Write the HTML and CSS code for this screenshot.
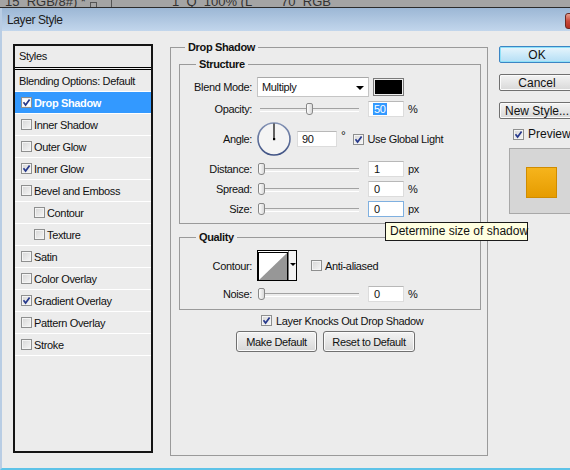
FILE: index.html
```html
<!DOCTYPE html>
<html>
<head>
<meta charset="utf-8">
<link rel="stylesheet" href="styles.css">
</head>
<body>
<div class="strip"><span class="strip-text">15_RGB/8#) *</span><span class="strip-box"></span><span class="strip-sep"></span><span class="strip-text2">1_Q_100% (L____70_RGB</span></div>
<div class="win">
  <div class="titlebar"><span class="title">Layer Style</span><span class="close"></span></div>
  <div class="content">
    <div class="lp">
      <div class="lp-head">Styles</div>
      <div class="lp-list">
        <div class="lp-row plain">Blending Options: Default</div>
        <div class="lp-row sel"><span class="cb on"><svg viewBox="0 0 11 11"><path d="M2.5 5.2 L4.6 8 L8.6 2.4"/></svg></span>Drop Shadow</div>
        <div class="lp-row"><span class="cb"></span>Inner Shadow</div>
        <div class="lp-row"><span class="cb"></span>Outer Glow</div>
        <div class="lp-row"><span class="cb on"><svg viewBox="0 0 11 11"><path d="M2.5 5.2 L4.6 8 L8.6 2.4"/></svg></span>Inner Glow</div>
        <div class="lp-row"><span class="cb"></span>Bevel and Emboss</div>
        <div class="lp-row sub"><span class="cb"></span>Contour</div>
        <div class="lp-row sub"><span class="cb"></span>Texture</div>
        <div class="lp-row"><span class="cb"></span>Satin</div>
        <div class="lp-row"><span class="cb"></span>Color Overlay</div>
        <div class="lp-row"><span class="cb on"><svg viewBox="0 0 11 11"><path d="M2.5 5.2 L4.6 8 L8.6 2.4"/></svg></span>Gradient Overlay</div>
        <div class="lp-row"><span class="cb"></span>Pattern Overlay</div>
        <div class="lp-row"><span class="cb"></span>Stroke</div>
      </div>
    </div>

    <fieldset class="main">
      <legend>Drop Shadow</legend>
      <fieldset class="grp structure">
        <legend>Structure</legend>
        <div class="row r-blend">
          <span class="lbl">Blend Mode:</span>
          <div class="select">Multiply<span class="arrow"></span></div>
          <span class="swatch"></span>
        </div>
        <div class="row r-op">
          <span class="lbl">Opacity:</span>
          <div class="slider"><span class="thumb" style="left:48px"></span></div>
          <span class="num"><span class="hl">50</span></span>
          <span class="unit">%</span>
        </div>
        <div class="row r-angle">
          <span class="lbl">Angle:</span>
          <svg class="dial" viewBox="0 0 34 34" width="34" height="34">
            <defs><linearGradient id="rg" x1="0" y1="0" x2="0" y2="1"><stop offset="0" stop-color="#8493b5"/><stop offset="1" stop-color="#3f5284"/></linearGradient></defs>
            <circle cx="17" cy="17" r="16" fill="#f4f4f4" stroke="url(#rg)" stroke-width="1.6"/>
            <line x1="17" y1="17" x2="17" y2="1.5" stroke="#000" stroke-width="1.2"/>
            <rect x="16" y="16" width="2.2" height="2.2" fill="#000"/>
          </svg>
          <span class="num wide">90</span>
          <span class="deg">°</span>
          <span class="cb on"><svg viewBox="0 0 11 11"><path d="M2.5 5.2 L4.6 8 L8.6 2.4"/></svg></span>
          <span class="cbl">Use Global Light</span>
        </div>
        <div class="row r-s r-dist">
          <span class="lbl">Distance:</span>
          <div class="slider"><span class="thumb" style="left:0px"></span></div>
          <span class="num">1</span>
          <span class="unit">px</span>
        </div>
        <div class="row r-s">
          <span class="lbl">Spread:</span>
          <div class="slider"><span class="thumb" style="left:0px"></span></div>
          <span class="num">0</span>
          <span class="unit">%</span>
        </div>
        <div class="row r-s">
          <span class="lbl">Size:</span>
          <div class="slider"><span class="thumb" style="left:0px"></span></div>
          <span class="num focus">0</span>
          <span class="unit">px</span>
        </div>
      </fieldset>

      <fieldset class="grp quality">
        <legend>Quality</legend>
        <div class="row r-contour">
          <span class="lbl">Contour:</span>
          <div class="contour">
            <svg viewBox="0 0 28 27" width="28" height="27" preserveAspectRatio="none"><rect width="28" height="27" fill="#fff"/><polygon points="0,27 28,0 28,27" fill="#979797"/></svg>
            <span class="c-arrow"></span>
          </div>
          <span class="cb"></span>
          <span class="cbl">Anti-aliased</span>
        </div>
        <div class="row r-noise">
          <span class="lbl">Noise:</span>
          <div class="slider"><span class="thumb" style="left:0px"></span></div>
          <span class="num">0</span>
          <span class="unit">%</span>
        </div>
      </fieldset>

      <div class="knock"><span class="cb on"><svg viewBox="0 0 11 11"><path d="M2.5 5.2 L4.6 8 L8.6 2.4"/></svg></span><span class="cbl">Layer Knocks Out Drop Shadow</span></div>
      <div class="btns">
        <span class="btn b-make">Make Default</span>
        <span class="btn b-reset">Reset to Default</span>
      </div>
    </fieldset>

    <div class="side">
      <span class="btn sbtn ok">OK</span>
      <span class="btn sbtn">Cancel</span>
      <span class="btn sbtn">New Style...</span>
      <div class="prev-row"><span class="cb on"><svg viewBox="0 0 11 11"><path d="M2.5 5.2 L4.6 8 L8.6 2.4"/></svg></span><span class="cbl big">Preview</span></div>
      <div class="prev-box"><span class="prev-sq"></span></div>
    </div>
  </div>
</div>
<div class="tooltip">Determine size of shadow</div>
</body>
</html>
```
FILE: styles.css
```css
* { box-sizing: border-box; }
html, body { margin: 0; padding: 0; }
body {
  width: 570px;
  height: 470px;
  overflow: hidden;
  background: #ececec;
  font-family: "Liberation Sans", Tahoma, sans-serif;
  font-size: 11px;
  letter-spacing: -0.35px;
  color: #111;
  position: relative;
}

/* background app strip */
.strip {
  height: 8px;
  background: #a4a4a4;
  border-bottom: 1px solid #2c2c2c;
  overflow: hidden;
  display: flex;
  align-items: flex-end;
  white-space: nowrap;
  letter-spacing: 0;
}
.strip-text, .strip-text2 {
  font-size: 13px;
  line-height: 13px;
  margin-bottom: -1px;
  color: #333;
}
.strip-text { margin-left: 5px; }
.strip-box {
  width: 7px; height: 5px;
  border: 1px solid #555;
  border-bottom: none;
  margin-left: 4px;
}
.strip-sep {
  width: 1px; height: 8px;
  background: #555;
  margin-left: 14px;
}
.strip-text2 { margin-left: 60px; }

.win {
  height: 462px;
  border-left: 2px solid #b9cde4;
  border-bottom: 2px solid #5ec3e8;
}

.titlebar {
  height: 23px;
  background: linear-gradient(#9cb7d5, #c2d6ec);
  display: flex;
  align-items: center;
  justify-content: space-between;
  overflow: hidden;
}
.title {
  font-size: 12px;
  letter-spacing: -0.4px;
  color: #1c1c1c;
  margin-left: 5px;
  margin-top: 1px;
}
.close {
  width: 40px;
  height: 16px;
  margin-right: -35px;
  margin-top: 2px;
  border: 1px solid #6b2a22;
  border-radius: 3px;
  background: linear-gradient(#e7a08e, #c9483a 50%, #b23021);
}

.content {
  display: flex;
  align-items: flex-start;
  padding: 13px 0 0 11px;
}

/* left panel */
.lp {
  width: 140px;
  height: 409px;
  border: 2px solid #141414;
  flex: none;
}
.lp-head {
  height: 22px;
  line-height: 21px;
  padding-left: 4px;
  border-bottom: 1px solid #000;
  margin-bottom: 1px;
}
.lp-list { border-top: 1px solid #000; }
.lp-row {
  height: 22px;
  border-bottom: 1px solid #fff;
  display: flex;
  align-items: center;
  padding-left: 6px;
  white-space: nowrap;
}
.lp-row.plain { padding-left: 4px; }
.lp-row.sub { padding-left: 19px; }
.lp-row.sel {
  background: #3399ff;
  color: #fff;
  font-weight: bold;
}
.lp-row .cb { margin-right: 2px; }

/* checkbox */
.cb {
  display: inline-block;
  width: 11px;
  height: 11px;
  border: 1px solid #8e8f8f;
  background: linear-gradient(135deg, #d6d6d6, #f6f6f6);
  box-shadow: inset 0 0 0 1px #f4f4f4;
  flex: none;
  position: relative;
}
.cb svg {
  position: absolute;
  left: -1px; top: -1px;
  width: 11px; height: 11px;
}
.cb svg path {
  fill: none;
  stroke: #27398c;
  stroke-width: 1.7;
}
.sel .cb { background: #fff; }
.cbl { margin-left: 3px; white-space: nowrap; }

/* main group */
fieldset { margin: 0; padding: 0; min-width: 0; }
legend {
  font-weight: bold;
  line-height: 13px;
  padding: 0 3px;
  color: #111;
}
.main {
  width: 318px;
  height: 415px;
  margin: -3px 0 0 17px;
  border: 1px solid #9a9a9a;
  flex: none;
}
.main > legend { margin-left: 14px; }
.grp {
  width: 302px;
  margin-left: 8px;
  border: 1px solid #9a9a9a;
}
.grp > legend { margin-left: 16px; }
.structure { margin-top: 4px; padding-bottom: 5px; }
.quality { margin-top: 7px; padding-bottom: 7px; }

.row {
  display: flex;
  align-items: center;
}
.lbl {
  width: 72px;
  text-align: right;
  margin-right: 5px;
  flex: none;
  white-space: nowrap;
}
.r-blend { height: 20px; margin-top: 6px; }
.r-op { height: 18px; margin-top: 3px; }
.r-angle { height: 34px; margin-top: 4px; }
.r-dist { margin-top: 4px !important; }
.r-s { height: 18px; margin-top: 2px; }
.r-contour { height: 31px; margin-top: 6px; }
.r-noise { height: 16px; margin-top: 5px; }

.select {
  width: 112px;
  height: 20px;
  background: #fff;
  border: 1px solid #c5c5c5;
  border-top-color: #a8a8a8;
  padding-left: 4px;
  line-height: 18px;
  position: relative;
}
.arrow {
  position: absolute;
  right: 4px;
  top: 8px;
  border-left: 4px solid transparent;
  border-right: 4px solid transparent;
  border-top: 4px solid #000;
}
.swatch {
  width: 31px;
  height: 18px;
  margin-left: 4px;
  background: #000;
  border: 1px solid #7a7a7a;
  box-shadow: inset 0 0 0 1px #eee;
}

.slider {
  width: 102px;
  height: 14px;
  position: relative;
  flex: none;
}
.slider::before {
  content: "";
  position: absolute;
  left: 3px; right: 0;
  top: 6px;
  height: 2px;
  border-top: 1px solid #a2a2a2;
  border-bottom: 1px solid #fff;
}
.thumb {
  position: absolute;
  top: 1px;
  width: 7px;
  height: 12px;
  margin-left: 1px;
  border: 1px solid #888;
  border-radius: 2px 2px 3px 3px;
  background: linear-gradient(90deg, #fdfdfd, #d9d9d9);
}
.num {
  width: 36px;
  height: 16px;
  margin-left: 9px;
  background: #fff;
  border: 1px solid #dcdcdc;
  border-top-color: #b8b8b8;
  padding-left: 5px;
  line-height: 14px;
  flex: none;
}
.num.wide { width: 40px; margin-left: 6px; padding-left: 4px; }
.num.focus { border-color: #7fb0e0; }
.hl { background: #3399ff; color: #fff; padding: 0 1px; margin-left: -1px; }
.unit { margin-left: 4px; }
.deg { margin-left: 4px; margin-top: -6px; font-size: 12px; }
.r-angle .cb { margin-left: 8px; }
.r-angle .cbl { margin-left: 3px; }

.contour {
  width: 40px;
  height: 31px;
  border: 1px solid #000;
  display: flex;
  background: #fff;
}
.contour svg { border: 1px solid #000; display: block; margin: 1px 0 0 0; height: 29px; width: 30px; }
.c-arrow {
  width: 8px;
  border-left: 1px solid #777;
  position: relative;
  background: #f4f4f4;
}
.c-arrow::after {
  content: "";
  position: absolute;
  left: 1px; top: 12px;
  border-left: 3px solid transparent;
  border-right: 3px solid transparent;
  border-top: 3px solid #000;
}
.r-contour .cb { margin-left: 14px; }
.r-noise .slider { margin-left: 0; }

.knock {
  display: flex;
  align-items: center;
  margin: 4px 0 0 90px;
  height: 13px;
}
.knock .cb { margin-right: 1px; }

.btns {
  display: flex;
  margin: 4px 0 0 65px;
  gap: 6px;
}
.btn {
  display: inline-flex;
  align-items: center;
  justify-content: center;
  height: 21px;
  border: 1px solid #707070;
  border-radius: 3px;
  background: linear-gradient(#f3f3f3, #e6e6e6 50%, #d8d8d8);
  box-shadow: inset 0 0 0 1px #fbfbfb;
  white-space: nowrap;
}
.b-make { width: 81px; }
.b-reset { width: 92px; }

/* right column */
.side {
  margin-left: 11px;
  width: 76px;
  flex: none;
  display: flex;
  flex-direction: column;
  align-items: flex-start;
  margin-top: 2px;
  letter-spacing: 0;
}
.sbtn {
  width: 76px;
  height: 17px;
  font-size: 12px;
  margin-bottom: 11px;
  border-radius: 2px;
}
.sbtn.ok {
  border-color: #3c85c4;
  background: linear-gradient(#e8f5fc, #cdeaf9 50%, #b5def5);
  box-shadow: inset 0 0 0 1px #8fe1f8;
}
.prev-row {
  display: flex;
  align-items: center;
  margin: -2px 0 0 14px;
  height: 12px;
}
.cbl.big { font-size: 12px; margin-left: 4px; }
.prev-box {
  margin: 8px 0 0 10px;
  width: 70px;
  height: 66px;
  background: #d6d6d6;
  border: 1px solid #a8a8a8;
  padding: 18px 0 0 16px;
}
.prev-sq {
  display: block;
  width: 31px;
  height: 31px;
  background: linear-gradient(#f6b41c, #e69c00);
  border: 1px solid #d08c00;
}

.tooltip {
  position: absolute;
  left: 385px;
  top: 222px;
  width: 143px;
  height: 19px;
  background: #ffffe1;
  border: 1px solid #1a1a1a;
  font-size: 12px;
  letter-spacing: 0;
  line-height: 17px;
  padding-left: 4px;
  white-space: nowrap;
}
```
